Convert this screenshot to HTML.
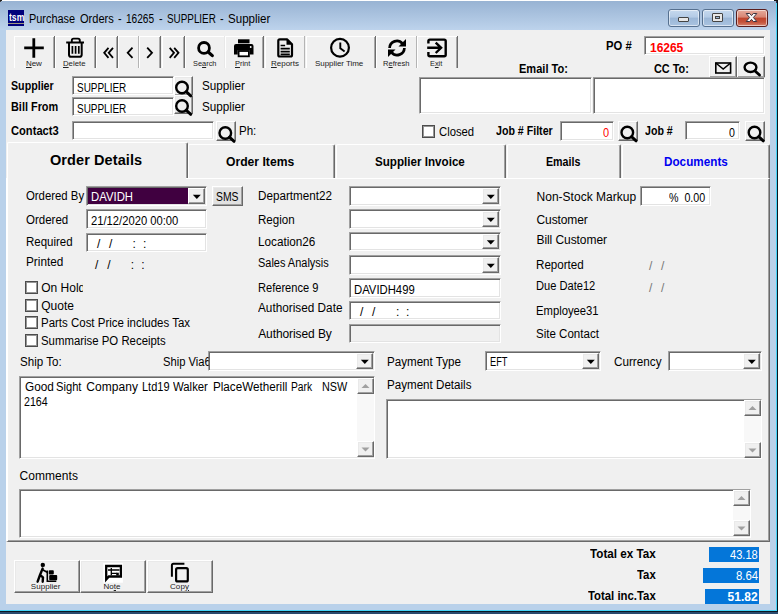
<!DOCTYPE html><html><head><meta charset="utf-8"><title>Purchase Orders</title><style>
html,body{margin:0;padding:0}
body{width:778px;height:614px;position:relative;overflow:hidden;background:#b9d1ea;font-family:"Liberation Sans",sans-serif}
body>div,body>svg,body>span{position:absolute}
.t{white-space:pre;line-height:normal;transform-origin:0 0}
.sk{box-sizing:border-box;border:1px solid;border-color:#a0a0a0 #fff #fff #a0a0a0;box-shadow:inset 1px 1px 0 #696969,inset -1px -1px 0 #e3e3e3}
.rs{box-sizing:border-box;border:1px solid;border-color:#fff #696969 #696969 #fff;box-shadow:inset -1px -1px 0 #a0a0a0,inset 1px 1px 0 #e9e9e9}
u{text-decoration:underline}

</style></head><body>
<div style="left:0px;top:0px;width:778px;height:614px;background:#b9d1ea;"></div>
<div style="left:0px;top:1px;width:777px;height:29px;background:linear-gradient(#98b3d3,#bdd3ec);"></div>
<div style="left:0px;top:0px;width:778px;height:1px;background:#fff;"></div>
<div style="left:776px;top:1px;width:1px;height:610px;background:#45d4f8;"></div>
<div style="left:777px;top:0px;width:1px;height:614px;background:#0a1622;"></div>
<div style="left:0px;top:610px;width:777px;height:1px;background:#45d4f8;"></div>
<div style="left:0px;top:611px;width:778px;height:1px;background:#0a1622;"></div>
<div style="left:0px;top:612px;width:778px;height:2px;background:#2a4a6d;"></div>
<div style="left:0px;top:0px;width:2px;height:1px;background:#222;"></div>
<div style="left:0px;top:1px;width:1px;height:1px;background:#444;"></div>
<div style="left:774px;top:0px;width:4px;height:1px;background:#111;"></div>
<div style="left:776px;top:1px;width:1px;height:2px;background:#334;"></div>
<div style="left:6px;top:30px;width:764px;height:574px;background:#f0f0f0;"></div>
<div style="left:8px;top:10px;width:16px;height:16px;background:#00007b;"></div>
<div style="left:8px;top:23px;width:16px;height:1px;background:#a09880;"></div>
<div style="left:668px;top:9px;width:32px;height:18px;background:linear-gradient(#c6d9ee 0%,#b4cbe6 45%,#9bb7d7 50%,#a9c3e0 100%);border:1px solid #56708f;border-radius:3px;box-sizing:border-box;box-shadow:inset 0 0 0 1px rgba(255,255,255,.55);"></div>
<div style="left:702px;top:9px;width:32px;height:18px;background:linear-gradient(#c6d9ee 0%,#b4cbe6 45%,#9bb7d7 50%,#a9c3e0 100%);border:1px solid #56708f;border-radius:3px;box-sizing:border-box;box-shadow:inset 0 0 0 1px rgba(255,255,255,.55);"></div>
<div style="left:736px;top:9px;width:32px;height:18px;background:linear-gradient(#e6ab9c 0%,#d88573 45%,#c0452d 50%,#c4523a 75%,#d68470 100%);border:1px solid #5a1e1e;border-radius:3px;box-sizing:border-box;box-shadow:inset 0 0 0 1px rgba(255,255,255,.55);"></div>
<div style="left:678px;top:17px;width:11px;height:5px;background:#e8e8e8;border:1px solid #444;box-sizing:border-box;border-radius:1px;"></div>
<div style="left:712px;top:13px;width:11px;height:9px;background:#e8e8e8;border:1px solid #444;box-sizing:border-box;border-radius:1px;"></div>
<div style="left:715px;top:16px;width:5px;height:3px;background:#9bb7d7;border:1px solid #444;box-sizing:border-box;"></div>
<svg style="left:745px;top:12px" width="14" height="12" viewBox="0 0 14 12"><path d="M1.2 1.5 L4.700 1.500 L6.500 3.600 L8.300 1.500 L11.800 1.500 L8.400 5.500 L11.800 9.500 L8.300 9.500 L6.500 7.400 L4.700 9.500 L1.200 9.500 L4.600 5.500 Z" fill="#fafafa" stroke="#3c3440" stroke-width="1" stroke-linejoin="round"/></svg>
<div style="left:14px;top:36px;width:1px;height:32px;background:#fff;"></div>
<div style="left:14px;top:36px;width:40px;height:1px;background:#fff;"></div>
<div style="left:54px;top:36px;width:1px;height:32px;background:#6d6d6d;"></div>
<div style="left:53px;top:37px;width:1px;height:31px;background:#a8a8a8;"></div>
<div style="left:55px;top:36px;width:1px;height:32px;background:#fff;"></div>
<div style="left:55px;top:36px;width:40px;height:1px;background:#fff;"></div>
<div style="left:95px;top:36px;width:1px;height:32px;background:#6d6d6d;"></div>
<div style="left:94px;top:37px;width:1px;height:31px;background:#a8a8a8;"></div>
<div style="left:96px;top:36px;width:1px;height:32px;background:#fff;"></div>
<div style="left:96px;top:36px;width:21px;height:1px;background:#fff;"></div>
<div style="left:117px;top:36px;width:1px;height:32px;background:#6d6d6d;"></div>
<div style="left:116px;top:37px;width:1px;height:31px;background:#a8a8a8;"></div>
<div style="left:118px;top:36px;width:1px;height:32px;background:#fff;"></div>
<div style="left:118px;top:36px;width:20px;height:1px;background:#fff;"></div>
<div style="left:138px;top:36px;width:1px;height:32px;background:#b4b4b4;"></div>
<div style="left:139px;top:36px;width:1px;height:32px;background:#fff;"></div>
<div style="left:139px;top:36px;width:21px;height:1px;background:#fff;"></div>
<div style="left:160px;top:36px;width:1px;height:32px;background:#6d6d6d;"></div>
<div style="left:159px;top:37px;width:1px;height:31px;background:#a8a8a8;"></div>
<div style="left:162px;top:36px;width:1px;height:32px;background:#fff;"></div>
<div style="left:162px;top:36px;width:22px;height:1px;background:#fff;"></div>
<div style="left:184px;top:36px;width:1px;height:32px;background:#6d6d6d;"></div>
<div style="left:183px;top:37px;width:1px;height:31px;background:#a8a8a8;"></div>
<div style="left:185px;top:36px;width:1px;height:32px;background:#fff;"></div>
<div style="left:185px;top:36px;width:39px;height:1px;background:#fff;"></div>
<div style="left:224px;top:36px;width:1px;height:32px;background:#e8e8e8;"></div>
<div style="left:225px;top:36px;width:1px;height:32px;background:#fff;"></div>
<div style="left:225px;top:36px;width:38px;height:1px;background:#fff;"></div>
<div style="left:263px;top:36px;width:1px;height:32px;background:#6d6d6d;"></div>
<div style="left:262px;top:37px;width:1px;height:31px;background:#a8a8a8;"></div>
<div style="left:265px;top:36px;width:1px;height:32px;background:#fff;"></div>
<div style="left:265px;top:36px;width:39px;height:1px;background:#fff;"></div>
<div style="left:304px;top:36px;width:1px;height:32px;background:#b4b4b4;"></div>
<div style="left:306px;top:36px;width:1px;height:32px;background:#fff;"></div>
<div style="left:306px;top:36px;width:69px;height:1px;background:#fff;"></div>
<div style="left:375px;top:36px;width:1px;height:32px;background:#6d6d6d;"></div>
<div style="left:374px;top:37px;width:1px;height:31px;background:#a8a8a8;"></div>
<div style="left:376px;top:36px;width:1px;height:32px;background:#fff;"></div>
<div style="left:376px;top:36px;width:40px;height:1px;background:#fff;"></div>
<div style="left:416px;top:36px;width:1px;height:32px;background:#b4b4b4;"></div>
<div style="left:417px;top:36px;width:1px;height:32px;background:#fff;"></div>
<div style="left:417px;top:36px;width:40px;height:1px;background:#fff;"></div>
<div style="left:457px;top:36px;width:1px;height:32px;background:#6d6d6d;"></div>
<div style="left:456px;top:37px;width:1px;height:31px;background:#a8a8a8;"></div>
<div class="sk" style="left:72px;top:76px;width:102px;height:19px;background:#fff;"></div>
<div class="rs" style="left:174px;top:76px;width:19px;height:20px;background:#f0f0f0;"></div>
<div class="sk" style="left:72px;top:97px;width:102px;height:19px;background:#fff;"></div>
<div class="rs" style="left:174px;top:95px;width:19px;height:19px;background:#f0f0f0;"></div>
<div class="sk" style="left:72px;top:121px;width:142px;height:19px;background:#fff;"></div>
<div class="rs" style="left:216px;top:121px;width:20px;height:20px;background:#f0f0f0;"></div>
<div class="sk" style="left:644px;top:36px;width:121px;height:19px;background:#fff;"></div>
<div class="rs" style="left:709px;top:56px;width:28px;height:22px;background:#f0f0f0;"></div>
<div class="rs" style="left:737px;top:56px;width:28px;height:22px;background:#f0f0f0;"></div>
<div class="sk" style="left:419px;top:77px;width:173px;height:37px;background:#fff;"></div>
<div class="sk" style="left:593px;top:77px;width:172px;height:37px;background:#fff;"></div>
<div style="left:422px;top:125px;width:13px;height:13px;background:#fff;border:1px solid #4c4c4c;box-shadow:inset 0 0 0 1px #969696;box-sizing:border-box;"></div>
<div class="sk" style="left:560px;top:121px;width:54px;height:20px;background:#fff;"></div>
<div class="rs" style="left:618px;top:121px;width:20px;height:20px;background:#f0f0f0;"></div>
<div class="sk" style="left:685px;top:121px;width:55px;height:19px;background:#fff;"></div>
<div class="rs" style="left:745px;top:121px;width:20px;height:20px;background:#f0f0f0;"></div>
<div style="left:6px;top:178px;width:764px;height:364px;background:#f0f0f0;border-left:2px solid #fff;border-top:1px solid #fff;border-right:1px solid #696969;border-bottom:1px solid #696969;box-sizing:border-box;box-shadow:inset -1px -1px 0 #a0a0a0;"></div>
<div style="left:188px;top:144px;width:147px;height:34px;background:#f0f0f0;border-left:1px solid #fff;border-top:1px solid #fff;border-right:1px solid #696969;box-sizing:border-box;box-shadow:inset -1px 0 0 #a0a0a0;border-radius:2px 2px 0 0;"></div>
<div style="left:336px;top:144px;width:170px;height:34px;background:#f0f0f0;border-left:1px solid #fff;border-top:1px solid #fff;border-right:1px solid #696969;box-sizing:border-box;box-shadow:inset -1px 0 0 #a0a0a0;border-radius:2px 2px 0 0;"></div>
<div style="left:507px;top:144px;width:114px;height:34px;background:#f0f0f0;border-left:1px solid #fff;border-top:1px solid #fff;border-right:1px solid #696969;box-sizing:border-box;box-shadow:inset -1px 0 0 #a0a0a0;border-radius:2px 2px 0 0;"></div>
<div style="left:622px;top:144px;width:148px;height:34px;background:#f0f0f0;border-left:1px solid #fff;border-top:1px solid #fff;border-right:1px solid #696969;box-sizing:border-box;box-shadow:inset -1px 0 0 #a0a0a0;border-radius:2px 2px 0 0;"></div>
<div style="left:7px;top:142px;width:181px;height:36px;background:#f0f0f0;border-left:1px solid #fff;border-top:1px solid #fff;border-right:1px solid #696969;box-sizing:border-box;box-shadow:inset -1px 0 0 #a0a0a0;border-radius:2px 2px 0 0;"></div>
<div style="left:8px;top:177px;width:178px;height:4px;background:#f0f0f0;"></div>
<div class="sk" style="left:86px;top:186px;width:121px;height:20px;background:#400040;"></div>
<div class="rs" style="left:188px;top:188px;width:17px;height:16px;background:#f0f0f0;"></div>
<svg style="left:0;top:0" width="778" height="614"><polygon points="192.8,194.70000000000002 200.8,194.70000000000002 196.8,198.9" fill="#000"/></svg>
<div class="rs" style="left:212px;top:186px;width:31px;height:20px;background:#e1e1e1;"></div>
<div class="sk" style="left:86px;top:209px;width:121px;height:20px;background:#fff;"></div>
<div class="sk" style="left:86px;top:233px;width:121px;height:19px;background:#fff;"></div>
<div style="left:25px;top:281px;width:13px;height:13px;background:#fff;border:1px solid #4c4c4c;box-shadow:inset 0 0 0 1px #969696;box-sizing:border-box;"></div>
<div style="left:25px;top:299px;width:13px;height:13px;background:#fff;border:1px solid #4c4c4c;box-shadow:inset 0 0 0 1px #969696;box-sizing:border-box;"></div>
<div style="left:25px;top:316px;width:13px;height:13px;background:#fff;border:1px solid #4c4c4c;box-shadow:inset 0 0 0 1px #969696;box-sizing:border-box;"></div>
<div style="left:25px;top:334px;width:13px;height:13px;background:#fff;border:1px solid #4c4c4c;box-shadow:inset 0 0 0 1px #969696;box-sizing:border-box;"></div>
<div class="sk" style="left:349px;top:186px;width:152px;height:20px;background:#fff;"></div>
<div class="rs" style="left:482px;top:188px;width:17px;height:16px;background:#f0f0f0;"></div>
<svg style="left:0;top:0" width="778" height="614"><polygon points="486.8,194.70000000000002 494.8,194.70000000000002 490.8,198.9" fill="#000"/></svg>
<div class="sk" style="left:349px;top:209px;width:152px;height:20px;background:#fff;"></div>
<div class="rs" style="left:482px;top:211px;width:17px;height:16px;background:#f0f0f0;"></div>
<svg style="left:0;top:0" width="778" height="614"><polygon points="486.8,217.70000000000002 494.8,217.70000000000002 490.8,221.9" fill="#000"/></svg>
<div class="sk" style="left:349px;top:232px;width:152px;height:19px;background:#fff;"></div>
<div class="rs" style="left:482px;top:234px;width:17px;height:15px;background:#f0f0f0;"></div>
<svg style="left:0;top:0" width="778" height="614"><polygon points="486.8,240.20000000000002 494.8,240.20000000000002 490.8,244.4" fill="#000"/></svg>
<div class="sk" style="left:349px;top:255px;width:152px;height:20px;background:#fff;"></div>
<div class="rs" style="left:482px;top:257px;width:17px;height:16px;background:#f0f0f0;"></div>
<svg style="left:0;top:0" width="778" height="614"><polygon points="486.8,263.7 494.8,263.7 490.8,267.90000000000003" fill="#000"/></svg>
<div class="sk" style="left:349px;top:278px;width:152px;height:20px;background:#fff;"></div>
<div class="sk" style="left:349px;top:301px;width:152px;height:19px;background:#fff;"></div>
<div class="sk" style="left:349px;top:324px;width:152px;height:19px;background:#f0f0f0;"></div>
<div class="sk" style="left:640px;top:186px;width:71px;height:20px;background:#fff;"></div>
<div class="sk" style="left:208px;top:351px;width:167px;height:20px;background:#fff;"></div>
<div class="rs" style="left:356px;top:353px;width:17px;height:16px;background:#f0f0f0;"></div>
<svg style="left:0;top:0" width="778" height="614"><polygon points="360.8,359.7 368.8,359.7 364.8,363.90000000000003" fill="#000"/></svg>
<div class="sk" style="left:485px;top:351px;width:116px;height:20px;background:#fff;"></div>
<div class="rs" style="left:582px;top:353px;width:17px;height:16px;background:#f0f0f0;"></div>
<svg style="left:0;top:0" width="778" height="614"><polygon points="586.8,359.7 594.8,359.7 590.8,363.90000000000003" fill="#000"/></svg>
<div class="sk" style="left:668px;top:351px;width:94px;height:20px;background:#fff;"></div>
<div class="rs" style="left:743px;top:353px;width:17px;height:16px;background:#f0f0f0;"></div>
<svg style="left:0;top:0" width="778" height="614"><polygon points="747.8,359.7 755.8,359.7 751.8,363.90000000000003" fill="#000"/></svg>
<div class="sk" style="left:19px;top:376px;width:356px;height:83px;background:#fff;"></div>
<div style="left:357px;top:378px;width:17px;height:79px;background:#f8f8f8;"></div>
<div class="rs" style="left:357px;top:378px;width:17px;height:16px;background:#f0f0f0;"></div>
<svg style="left:0;top:0" width="778" height="614"><polygon points="361.5,388.0 369.5,388.0 365.5,384.0" fill="#a0a0a0"/></svg>
<div class="rs" style="left:357px;top:441px;width:17px;height:16px;background:#f0f0f0;"></div>
<svg style="left:0;top:0" width="778" height="614"><polygon points="361.5,447.5 369.5,447.5 365.5,451.5" fill="#a0a0a0"/></svg>
<div class="sk" style="left:386px;top:399px;width:376px;height:60px;background:#fff;"></div>
<div style="left:744px;top:400px;width:17px;height:58px;background:#f8f8f8;"></div>
<div class="rs" style="left:744px;top:400px;width:17px;height:16px;background:#f0f0f0;"></div>
<svg style="left:0;top:0" width="778" height="614"><polygon points="748.5,410.0 756.5,410.0 752.5,406.0" fill="#a0a0a0"/></svg>
<div class="rs" style="left:744px;top:442px;width:17px;height:16px;background:#f0f0f0;"></div>
<svg style="left:0;top:0" width="778" height="614"><polygon points="748.5,448.5 756.5,448.5 752.5,452.5" fill="#a0a0a0"/></svg>
<div class="sk" style="left:19px;top:489px;width:732px;height:49px;background:#fff;"></div>
<div style="left:733px;top:490px;width:17px;height:46px;background:#f8f8f8;"></div>
<div class="rs" style="left:733px;top:490px;width:17px;height:16px;background:#f0f0f0;"></div>
<svg style="left:0;top:0" width="778" height="614"><polygon points="737.5,500.0 745.5,500.0 741.5,496.0" fill="#a0a0a0"/></svg>
<div class="rs" style="left:733px;top:520px;width:17px;height:16px;background:#f0f0f0;"></div>
<svg style="left:0;top:0" width="778" height="614"><polygon points="737.5,526.5 745.5,526.5 741.5,530.5" fill="#a0a0a0"/></svg>
<div class="rs" style="left:14px;top:560px;width:66px;height:33px;background:#f0f0f0;"></div>
<div class="rs" style="left:80px;top:560px;width:66px;height:33px;background:#f0f0f0;"></div>
<div class="rs" style="left:147px;top:560px;width:66px;height:33px;background:#f0f0f0;"></div>
<div style="left:709px;top:547px;width:50px;height:15px;background:#0476d9;"></div>
<div style="left:703px;top:568px;width:56px;height:15px;background:#0476d9;"></div>
<div style="left:705px;top:589px;width:54px;height:15px;background:#0476d9;"></div>
<svg style="left:0;top:0" width="778" height="614" viewBox="0 0 778 614"><path d="M24.2 47.8h19.600M33.800 38.300v19.400" stroke="#000" stroke-width="2.800" fill="none"/><path d="M66.200 42.500h17.800M71.800 42v-1.600q0-1.800 1.800-1.800h4.400q1.800 0 1.800 1.800v1.600" stroke="#000" stroke-width="1.900" fill="none"/><path d="M69 43v11.700q0 2.100 2.100 2.100h8.500q2.100 0 2.100-2.100V43" stroke="#000" stroke-width="2" fill="none"/><path d="M72.400 46v7.800M75.600 46v7.800M78.800 46v7.800" stroke="#000" stroke-width="1.700" fill="none"/><path d="M108.500 47.800l-4.300 5 4.300 5M113 47.800l-4.300 5 4.300 5" stroke="#000" stroke-width="1.800" fill="none"/><path d="M132.500 47.700l-4.800 5.100 4.800 5.100" stroke="#000" stroke-width="1.800" fill="none"/><path d="M147.200 47.700l4.800 5.100-4.800 5.100" stroke="#000" stroke-width="1.800" fill="none"/><path d="M169.700 47.800l4.300 5-4.300 5M174.200 47.800l4.300 5-4.300 5" stroke="#000" stroke-width="1.800" fill="none"/><circle cx="204" cy="47.900" r="5.400" fill="none" stroke="#000" stroke-width="2.800"/><line x1="208.200" y1="52" x2="212.300" y2="55.600" stroke="#000" stroke-width="3.200" stroke-linecap="round"/><rect x="238" y="39.300" width="11.500" height="4" fill="#000"/><path d="M234 46q0-2 2-2h15.500q2 0 2 2v8.500h-3.800v-4.200h-12v4.200h-3.700z" fill="#000"/><rect x="238.600" y="51" width="10.300" height="5.300" fill="#fff" stroke="#000" stroke-width="1.800"/><circle cx="250.700" cy="47" r="0.900" fill="#fff"/><path d="M279.800 39.300h7.200l5 5v10.700q0 1.500-1.500 1.500h-10.700q-1.500 0-1.500-1.500v-14.200q0-1.500 1.500-1.500z" fill="none" stroke="#000" stroke-width="2.200" stroke-linejoin="round"/><path d="M286.500 38.800l6 6h-6z" fill="#000"/><path d="M280.600 45.500h4.500M280.600 48.700h9.200M280.600 51.600h9.200M280.600 54.400h9.200" stroke="#000" stroke-width="1.700"/><circle cx="340" cy="47.750" r="8.900" fill="none" stroke="#000" stroke-width="2.200"/><path d="M340.300 42.600v5.600l4.300 3.200" fill="none" stroke="#000" stroke-width="1.900"/><path d="M389.600 48a7.200 7.200 0 0 1 12.800-4.300" fill="none" stroke="#000" stroke-width="2.700"/><path d="M406 39v7.500h-7.500z" fill="#000"/><path d="M404.400 48a7.200 7.200 0 0 1-12.800 4.300" fill="none" stroke="#000" stroke-width="2.700"/><path d="M388 57v-7.500h7.500z" fill="#000"/><path d="M428.400 43.500v-2.400q0-1.500 1.500-1.500h14.300q1.500 0 1.500 1.500v13.700q0 1.500-1.500 1.500h-14.300q-1.500 0-1.500-1.500v-2.800" fill="none" stroke="#000" stroke-width="2.400"/><path d="M427.200 47.800h13.300M435.700 42.600l5.400 5.200-5.400 5.200" fill="none" stroke="#000" stroke-width="2.400"/><circle cx="182" cy="87.5" r="5.8" fill="none" stroke="#000" stroke-width="2.4"/><line x1="186.176" y1="91.676" x2="190.77599999999998" y2="95.876" stroke="#000" stroke-width="2.9" stroke-linecap="round"/><circle cx="182" cy="106" r="5.8" fill="none" stroke="#000" stroke-width="2.4"/><line x1="186.176" y1="110.176" x2="190.77599999999998" y2="114.376" stroke="#000" stroke-width="2.9" stroke-linecap="round"/><circle cx="225.3" cy="133" r="5.8" fill="none" stroke="#000" stroke-width="2.4"/><line x1="229.476" y1="137.176" x2="234.076" y2="141.37599999999998" stroke="#000" stroke-width="2.9" stroke-linecap="round"/><circle cx="627.3" cy="132.5" r="5.8" fill="none" stroke="#000" stroke-width="2.4"/><line x1="631.476" y1="136.676" x2="636.076" y2="140.87599999999998" stroke="#000" stroke-width="2.9" stroke-linecap="round"/><circle cx="754.5" cy="132.5" r="5.8" fill="none" stroke="#000" stroke-width="2.4"/><line x1="758.676" y1="136.676" x2="763.2760000000001" y2="140.87599999999998" stroke="#000" stroke-width="2.9" stroke-linecap="round"/><ellipse cx="750.5" cy="67.300" rx="5.900" ry="4.700" fill="none" stroke="#000" stroke-width="2.400"/><line x1="755" y1="71" x2="759.500" y2="75" stroke="#000" stroke-width="2.900" stroke-linecap="round"/><rect x="715.8" y="63" width="14.8" height="10" fill="none" stroke="#000" stroke-width="1.6"/><path d="M715.8 63l7.400 6 7.400-6" fill="none" stroke="#000" stroke-width="1.6"/><circle cx="42.800" cy="564.900" r="2.200" fill="#000"/><path d="M42.600 568.600L40 575l3 2.400-0.300 4.300M40 575l-2.400 6.700" fill="none" stroke="#000" stroke-width="2.400" stroke-linecap="round" stroke-linejoin="round"/><path d="M42.600 569.800l4.200 2.200" fill="none" stroke="#000" stroke-width="1.800" stroke-linecap="round"/><path d="M47.300 570.500v10.800h9" fill="none" stroke="#000" stroke-width="1.600"/><rect x="48.800" y="570.200" width="5" height="4.200" rx="0.900" fill="#000"/><rect x="49.200" y="575" width="8" height="5.200" rx="0.900" fill="#000"/><rect x="103.200" y="563" width="19.700" height="19.700" fill="#fff"/><path d="M106.200 566h14.700v10.500h-12l-2.700 3z" fill="none" stroke="#000" stroke-width="2.300" stroke-linejoin="miter"/><path d="M108 570h11.500M111.300 568v7.300M111.300 573.300h5.500" fill="none" stroke="#000" stroke-width="1.300"/><rect x="116.200" y="572.700" width="2.600" height="2.800" fill="#000"/><path d="M171.900 576.800v-11.600q0-1.500 1.500-1.500h11" fill="none" stroke="#000" stroke-width="2"/><rect x="176.100" y="568.200" width="11.700" height="13.200" rx="1.500" fill="none" stroke="#000" stroke-width="2.200"/></svg>
<span class="t" style="left:8.50px;top:11.30px;font-size:10.5px;color:#fff;font-weight:bold;transform:scaleX(0.8181);">tsm</span>
<span class="t" style="left:28.70px;top:11.94px;font-size:12px;color:#000;transform:scaleX(0.9094);">Purchase</span>
<span class="t" style="left:79.80px;top:11.94px;font-size:12px;color:#000;transform:scaleX(0.9216);">Orders</span>
<span class="t" style="left:118.20px;top:11.94px;font-size:12px;color:#000;transform:scaleX(0.9000);">-</span>
<span class="t" style="left:125.60px;top:11.94px;font-size:12px;color:#000;transform:scaleX(0.8428);">16265</span>
<span class="t" style="left:158.90px;top:11.94px;font-size:12px;color:#000;transform:scaleX(0.9000);">-</span>
<span class="t" style="left:166.50px;top:11.94px;font-size:12px;color:#000;transform:scaleX(0.8226);">SUPPLIER</span>
<span class="t" style="left:220.40px;top:11.94px;font-size:12px;color:#000;transform:scaleX(0.9000);">-</span>
<span class="t" style="left:227.60px;top:11.94px;font-size:12px;color:#000;transform:scaleX(0.9630);">Supplier</span>
<span class="t" style="left:26.00px;top:58.76px;font-size:8px;color:#222;letter-spacing:-0.113px;"><u>N</u>ew</span>
<span class="t" style="left:63.00px;top:58.76px;font-size:8px;color:#222;transform:scaleX(0.9715);"><u>D</u>elete</span>
<span class="t" style="left:193.00px;top:58.76px;font-size:8px;color:#222;transform:scaleX(0.9238);">Se<u>a</u>rch</span>
<span class="t" style="left:235.00px;top:58.76px;font-size:8px;color:#222;transform:scaleX(0.9288);"><u>P</u>rint</span>
<span class="t" style="left:271.00px;top:58.76px;font-size:8px;color:#222;letter-spacing:-0.002px;"><u>R</u>eports</span>
<span class="t" style="left:315.00px;top:58.76px;font-size:8px;color:#222;letter-spacing:-0.050px;">Supplier Time</span>
<span class="t" style="left:383.00px;top:58.76px;font-size:8px;color:#222;transform:scaleX(0.9433);">R<u>e</u>fresh</span>
<span class="t" style="left:430.00px;top:58.76px;font-size:8px;color:#222;transform:scaleX(0.9211);">E<u>x</u>it</span>
<span class="t" style="left:11.00px;top:78.64px;font-size:12px;color:#000;font-weight:bold;transform:scaleX(0.8896);">Supplier</span>
<span class="t" style="left:77.00px;top:80.84px;font-size:12px;color:#000;transform:scaleX(0.8293);">SUPPLIER</span>
<span class="t" style="left:202.00px;top:78.64px;font-size:12px;color:#000;transform:scaleX(0.9766);">Supplier</span>
<span class="t" style="left:11.00px;top:99.94px;font-size:12px;color:#000;font-weight:bold;transform:scaleX(0.9078);">Bill From</span>
<span class="t" style="left:77.00px;top:101.84px;font-size:12px;color:#000;transform:scaleX(0.8293);">SUPPLIER</span>
<span class="t" style="left:202.00px;top:99.94px;font-size:12px;color:#000;transform:scaleX(0.9766);">Supplier</span>
<span class="t" style="left:11.00px;top:123.84px;font-size:12px;color:#000;font-weight:bold;transform:scaleX(0.9290);">Contact3</span>
<span class="t" style="left:239.00px;top:123.84px;font-size:12px;color:#000;transform:scaleX(0.9617);">Ph:</span>
<span class="t" style="left:606.00px;top:39.14px;font-size:12px;color:#000;font-weight:bold;transform:scaleX(0.9396);">PO #</span>
<span class="t" style="left:650.00px;top:40.74px;font-size:12px;color:#ff0000;font-weight:bold;letter-spacing:-0.024px;">16265</span>
<span class="t" style="left:519.00px;top:62.14px;font-size:12px;color:#000;font-weight:bold;transform:scaleX(0.9210);">Email To:</span>
<span class="t" style="left:653.50px;top:61.94px;font-size:12px;color:#000;font-weight:bold;transform:scaleX(0.9082);">CC To:</span>
<span class="t" style="left:438.80px;top:124.74px;font-size:12px;color:#000;transform:scaleX(0.9406);">Closed</span>
<span class="t" style="left:496.00px;top:123.84px;font-size:12px;color:#000;font-weight:bold;transform:scaleX(0.8859);">Job # Filter</span>
<span class="t" style="left:602.60px;top:125.84px;font-size:12px;color:#ff0000;transform:scaleX(0.9143);">0</span>
<span class="t" style="left:645.00px;top:123.84px;font-size:12px;color:#000;font-weight:bold;transform:scaleX(0.8842);">Job #</span>
<span class="t" style="left:729.20px;top:125.84px;font-size:12px;color:#000;transform:scaleX(0.8857);">0</span>
<span class="t" style="left:50.00px;top:152.48px;font-size:14.5px;color:#000;font-weight:bold;letter-spacing:0.083px;">Order Details</span>
<span class="t" style="left:226.00px;top:154.04px;font-size:13px;color:#000;font-weight:bold;transform:scaleX(0.9348);">Order Items</span>
<span class="t" style="left:375.00px;top:154.04px;font-size:13px;color:#000;font-weight:bold;transform:scaleX(0.8944);">Supplier Invoice</span>
<span class="t" style="left:545.80px;top:154.04px;font-size:13px;color:#000;font-weight:bold;transform:scaleX(0.8205);">Emails</span>
<span class="t" style="left:663.70px;top:154.04px;font-size:13px;color:#0000f0;font-weight:bold;transform:scaleX(0.9014);">Documents</span>
<span class="t" style="left:25.60px;top:188.84px;font-size:12px;color:#000;transform:scaleX(0.9469);">Ordered By</span>
<span class="t" style="left:91.40px;top:190.04px;font-size:12px;color:#fff;transform:scaleX(0.9456);">DAVIDH</span>
<span class="t" style="left:215.50px;top:189.74px;font-size:12px;color:#000;transform:scaleX(0.8654);">SMS</span>
<span class="t" style="left:25.60px;top:212.84px;font-size:12px;color:#000;transform:scaleX(0.9597);">Ordered</span>
<span class="t" style="left:91.40px;top:213.94px;font-size:12px;color:#000;transform:scaleX(0.9344);">21/12/2020 00:00</span>
<span class="t" style="left:25.60px;top:235.04px;font-size:12px;color:#000;transform:scaleX(0.9579);">Required</span>
<span class="t" style="left:97.00px;top:237.44px;font-size:12px;color:#000;letter-spacing:0.666px;">/  /</span>
<span class="t" style="left:132.40px;top:237.44px;font-size:12px;color:#000;letter-spacing:0.199px;">:  :</span>
<span class="t" style="left:25.60px;top:255.44px;font-size:12px;color:#000;transform:scaleX(0.9827);">Printed</span>
<span class="t" style="left:95.00px;top:258.44px;font-size:12px;color:#000;letter-spacing:0.733px;">/  /</span>
<span class="t" style="left:130.80px;top:258.44px;font-size:12px;color:#000;letter-spacing:0.133px;">:  :</span>
<span class="t" style="left:41.30px;top:280.84px;font-size:12px;color:#000;letter-spacing:-0.008px;width:41.70px;overflow:hidden;">On Hold</span>
<span class="t" style="left:41.30px;top:298.84px;font-size:12px;color:#000;letter-spacing:-0.029px;">Quote</span>
<span class="t" style="left:41.30px;top:315.84px;font-size:12px;color:#000;transform:scaleX(0.9561);">Parts Cost Price includes Tax</span>
<span class="t" style="left:41.30px;top:333.84px;font-size:12px;color:#000;transform:scaleX(0.9492);">Summarise PO Receipts</span>
<span class="t" style="left:258.30px;top:188.84px;font-size:12px;color:#000;transform:scaleX(0.9729);">Department22</span>
<span class="t" style="left:258.30px;top:212.94px;font-size:12px;color:#000;transform:scaleX(0.9664);">Region</span>
<span class="t" style="left:258.30px;top:235.04px;font-size:12px;color:#000;transform:scaleX(0.9773);">Location26</span>
<span class="t" style="left:258.20px;top:255.84px;font-size:12px;color:#000;transform:scaleX(0.9137);">Sales Analysis</span>
<span class="t" style="left:258.30px;top:280.94px;font-size:12px;color:#000;transform:scaleX(0.9239);">Reference 9</span>
<span class="t" style="left:354.00px;top:282.64px;font-size:12px;color:#000;transform:scaleX(0.9414);">DAVIDH499</span>
<span class="t" style="left:258.20px;top:300.84px;font-size:12px;color:#000;transform:scaleX(0.9817);">Authorised Date</span>
<span class="t" style="left:360.00px;top:304.64px;font-size:12px;color:#000;letter-spacing:0.666px;">/  /</span>
<span class="t" style="left:396.00px;top:304.64px;font-size:12px;color:#000;letter-spacing:-0.001px;">:  :</span>
<span class="t" style="left:258.20px;top:326.84px;font-size:12px;color:#000;letter-spacing:-0.092px;">Authorised By</span>
<span class="t" style="left:536.50px;top:190.14px;font-size:12px;color:#000;letter-spacing:0.020px;">Non-Stock Markup</span>
<span class="t" style="left:669.00px;top:190.64px;font-size:12px;color:#000;transform:scaleX(0.8898);">%  0.00</span>
<span class="t" style="left:536.50px;top:212.84px;font-size:12px;color:#000;letter-spacing:-0.103px;">Customer</span>
<span class="t" style="left:536.50px;top:232.84px;font-size:12px;color:#000;letter-spacing:-0.071px;">Bill Customer</span>
<span class="t" style="left:536.40px;top:258.14px;font-size:12px;color:#000;transform:scaleX(0.9673);">Reported</span>
<span class="t" style="left:649.00px;top:258.64px;font-size:12px;color:#777;letter-spacing:0.666px;">/  /</span>
<span class="t" style="left:536.40px;top:278.84px;font-size:12px;color:#000;transform:scaleX(0.9259);">Due Date12</span>
<span class="t" style="left:649.00px;top:281.14px;font-size:12px;color:#777;letter-spacing:0.666px;">/  /</span>
<span class="t" style="left:536.40px;top:304.14px;font-size:12px;color:#000;transform:scaleX(0.9383);">Employee31</span>
<span class="t" style="left:536.40px;top:326.94px;font-size:12px;color:#000;transform:scaleX(0.9616);">Site Contact</span>
<span class="t" style="left:19.50px;top:355.14px;font-size:12px;color:#000;transform:scaleX(0.9645);">Ship To:</span>
<span class="t" style="left:163.00px;top:355.14px;font-size:12px;color:#000;transform:scaleX(0.9324);width:48.80px;overflow:hidden;">Ship Via6</span>
<span class="t" style="left:386.50px;top:355.14px;font-size:12px;color:#000;transform:scaleX(0.9671);">Payment Type</span>
<span class="t" style="left:490.00px;top:355.14px;font-size:12px;color:#000;transform:scaleX(0.7714);">EFT</span>
<span class="t" style="left:613.50px;top:355.14px;font-size:12px;color:#000;transform:scaleX(0.9758);">Currency</span>
<span class="t" style="left:24.50px;top:380.44px;font-size:12px;color:#000;transform:scaleX(0.9832);">Good</span>
<span class="t" style="left:56.20px;top:380.44px;font-size:12px;color:#000;transform:scaleX(0.9316);">Sight</span>
<span class="t" style="left:86.30px;top:380.44px;font-size:12px;color:#000;letter-spacing:0.040px;">Company</span>
<span class="t" style="left:141.80px;top:380.44px;font-size:12px;color:#000;transform:scaleX(0.9158);">Ltd19</span>
<span class="t" style="left:173.40px;top:380.44px;font-size:12px;color:#000;transform:scaleX(0.9459);">Walker</span>
<span class="t" style="left:212.70px;top:380.44px;font-size:12px;color:#000;transform:scaleX(0.9722);">PlaceWetherill</span>
<span class="t" style="left:290.60px;top:380.44px;font-size:12px;color:#000;transform:scaleX(0.8569);">Park</span>
<span class="t" style="left:322.30px;top:380.44px;font-size:12px;color:#000;transform:scaleX(0.9034);">NSW</span>
<span class="t" style="left:24.00px;top:395.14px;font-size:12px;color:#000;transform:scaleX(0.8882);">2164</span>
<span class="t" style="left:386.50px;top:378.14px;font-size:12px;color:#000;transform:scaleX(0.9672);">Payment Details</span>
<span class="t" style="left:19.50px;top:469.14px;font-size:12px;color:#000;letter-spacing:0.069px;">Comments</span>
<span class="t" style="left:30.80px;top:581.56px;font-size:8px;color:#222;letter-spacing:0.045px;">Supplier</span>
<span class="t" style="left:103.40px;top:581.56px;font-size:8px;color:#222;letter-spacing:0.050px;">No<u>t</u>e</span>
<span class="t" style="left:170.00px;top:581.56px;font-size:8px;color:#222;letter-spacing:0.075px;">Cop<u>y</u></span>
<span class="t" style="left:590.00px;top:547.14px;font-size:12px;color:#000;font-weight:bold;transform:scaleX(0.9720);">Total ex Tax</span>
<span class="t" style="left:730.00px;top:548.14px;font-size:12px;color:#fff;transform:scaleX(0.9224);">43.18</span>
<span class="t" style="left:637.00px;top:568.14px;font-size:12px;color:#000;font-weight:bold;transform:scaleX(0.9446);">Tax</span>
<span class="t" style="left:735.50px;top:569.14px;font-size:12px;color:#fff;transform:scaleX(0.9501);">8.64</span>
<span class="t" style="left:588.00px;top:589.14px;font-size:12px;color:#000;font-weight:bold;transform:scaleX(0.9459);">Total inc.Tax</span>
<span class="t" style="left:727.50px;top:590.14px;font-size:12px;color:#fff;font-weight:bold;letter-spacing:0.036px;">51.82</span>
</body></html>
